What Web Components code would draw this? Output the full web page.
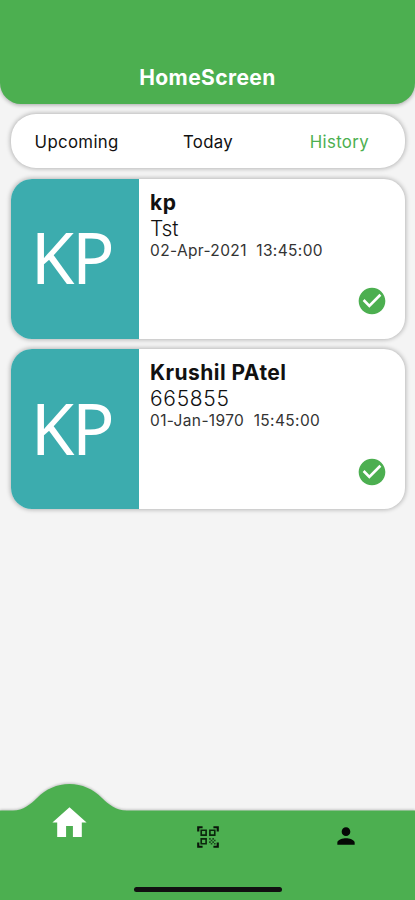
<!DOCTYPE html>
<html lang="en">
<head>
<meta charset="utf-8">
<title>HomeScreen</title>
<style>
html, body { margin: 0; height: 100%; }
body { font-family: Inter, "Liberation Sans", sans-serif; color: #111; background: #f4f4f4; overflow: hidden; }
</style>
</head>
<body>
<home-screen></home-screen>
<script>
const define = (name, html) => {
  const template = document.createElement('template');
  template.innerHTML = html;
  customElements.define(name, class extends HTMLElement {
    constructor() {
      super();
      this.attachShadow({ mode: 'open' }).append(template.content.cloneNode(true));
    }
  });
};

define('app-header', `
<style>
:host { display: flex; flex: none; box-sizing: border-box; height: 104px; padding-bottom: 13px; align-items: flex-end; justify-content: center;
  background: #4caf50; color: #fff; border-radius: 0 0 21px 21px; box-shadow: 0 1px 4px rgba(0,0,0,.32);
  font-size: 21px; line-height: 26px; font-weight: 650; letter-spacing: .4px; }
</style><slot></slot>`);

define('tab-bar', `
<style>
:host { display: grid; flex: none; grid-template-columns: repeat(3, 1fr); align-items: center; height: 54px; background: #fff;
  border-radius: 25px; box-shadow: 0 0 4px 1px rgba(0,0,0,.25); }
</style><slot></slot>`);

define('tab-item', `
<style>
:host { display: block; text-align: center; font-size: 16.800px; line-height: 22px; font-weight: 400; letter-spacing: .35px; padding-top: 2px; }
:host([active]) { color: #4caf50; }
</style><slot></slot>`);

define('check-badge', `
<style>:host { display: block; width: 32px; height: 32px; } svg { display: block; }</style>
<svg width="32" height="32" viewBox="0 0 24 24"><path fill="#4caf50" d="M12 2C6.48 2 2 6.48 2 12s4.480 10 10 10 10-4.480 10-10S17.520 2 12 2zm-2 15l-5-5 1.410-1.410L10 14.170l7.590-7.590L19 8l-9 9z"/></svg>`);

define('visit-card', `
<style>
:host { display: flex; flex: none; height: 160px; background: #fff; border-radius: 21px; box-shadow: 0 0 4px 1px rgba(0,0,0,.25); }
.avatar { flex: none; box-sizing: border-box; width: 128px; padding: 0 7px 3px 0; display: flex; align-items: center; justify-content: center; background: #3cacae; border-radius: 21px 0 0 21px;
  color: #fff; font: 400 70.500px/80px "Noto Sans", sans-serif; letter-spacing: -2.500px; }
.info { flex: 1; display: flex; flex-direction: column; align-items: flex-start; padding: 11px 17.500px 21.500px 11px; }
.name { font-size: 21px; line-height: 26px; font-weight: 680; letter-spacing: .45px; }
.note { font-size: 21px; line-height: 25px; font-weight: 350; letter-spacing: -.2px; }
:host([numeric]) .note { letter-spacing: .7px; }
.date { font-size: 15.500px; line-height: 19px; letter-spacing: .36px; color: #333; white-space: pre; }
check-badge { margin-top: auto; align-self: flex-end; }
</style>
<div class="avatar"><slot name="initials"></slot></div>
<div class="info"><div class="name"><slot name="name"></slot></div><div class="note"><slot name="note"></slot></div><div class="date"><slot name="date"></slot></div><check-badge></check-badge></div>`);

define('nav-bar', `
<style>
:host { display: grid; flex: none; height: 117px; grid-template: 117px / 1fr; }
.shape, .items { grid-area: 1 / 1; display: block; }
.shape { overflow: visible; filter: drop-shadow(0 -1px 1px rgba(0,0,0,.2)); }
.items { display: grid; grid-template: 91px 1fr / repeat(3, 1fr); align-items: start; justify-items: center; z-index: 1; }
.home { margin-top: 19px; }
.scan { margin: 41px 0 0 1px; }
.user { margin: 40px 0 0 1px; }
.line { grid-column: 1 / 4; width: 148px; height: 5px; border-radius: 3px; background: #111; margin: 13px 0 0 1px; }
</style>
<svg class="shape" width="415" height="117" viewBox="0 0 415 117"><path fill="#4caf50" d="M0 27.500H13C23 27.500 31 21 37 15C46 6 57 1 69.500 1S93 6 102 15C108 21 116 27.500 127 27.500H415V117H0z"/></svg>
<div class="items">
<svg class="home" width="41" height="41" viewBox="0 0 24 24"><path fill="#fff" d="M10 20.500v-6.500h4v6.500h5.200V12H22L12 3 2 12h2.800v8.500z"/></svg>
<svg class="scan" width="26" height="26" viewBox="0 0 24 24"><path fill="#0a260c" d="M9.500 6.500v3h-3v-3h3M11 5H5v6h6V5zm-1.500 9.500v3h-3v-3h3M11 13H5v6h6v-6zm6.500-6.500v3h-3v-3h3M19 5h-6v6h6V5z"/><path fill="#0a260c" fill-opacity=".75" d="M13 13h1.500v1.500H13V13zm1.500 1.500H16V16h-1.500v-1.500zM16 13h1.500v1.500H16V13zm-3 3h1.500v1.500H13V16zm1.500 1.500H16V19h-1.500v-1.500zM16 16h1.500v1.500H16V16zm1.500-1.500H19V16h-1.500v-1.500zm0 3H19V19h-1.500v-1.500z"/><path fill="#0a160a" d="M22 7h-2V4h-3V2h5v5zm0 15v-5h-2v3h-3v2h5zM2 22h5v-2H4v-3H2v5zM2 2v5h2V4h3V2H2z"/></svg>
<svg class="user" width="26" height="26" viewBox="0 0 24 24"><path fill="#050805" d="M12 12c2.210 0 4-1.790 4-4s-1.790-4-4-4-4 1.790-4 4 1.790 4 4 4zm0 2c-2.670 0-8 1.340-8 4v2h16v-2c0-2.660-5.330-4-8-4z"/></svg>
<div class="line"></div>
</div>`);

define('home-screen', `
<style>
:host { display: flex; flex-direction: column; width: 415px; height: 900px; background: #f4f4f4; }
main { flex: 1; display: flex; flex-direction: column; gap: 10.500px; padding: 10px 10px 0 11px; }
</style>
<app-header>HomeScreen</app-header>
<main>
<tab-bar><tab-item>Upcoming</tab-item><tab-item>Today</tab-item><tab-item active>History</tab-item></tab-bar>
<visit-card><span slot="initials">KP</span><span slot="name">kp</span><span slot="note">Tst</span><span slot="date">02-Apr-2021  13:45:00</span></visit-card>
<visit-card numeric><span slot="initials">KP</span><span slot="name">Krushil PAtel</span><span slot="note">665855</span><span slot="date">01-Jan-1970  15:45:00</span></visit-card>
</main>
<nav-bar></nav-bar>`);
</script>
</body>
</html>
